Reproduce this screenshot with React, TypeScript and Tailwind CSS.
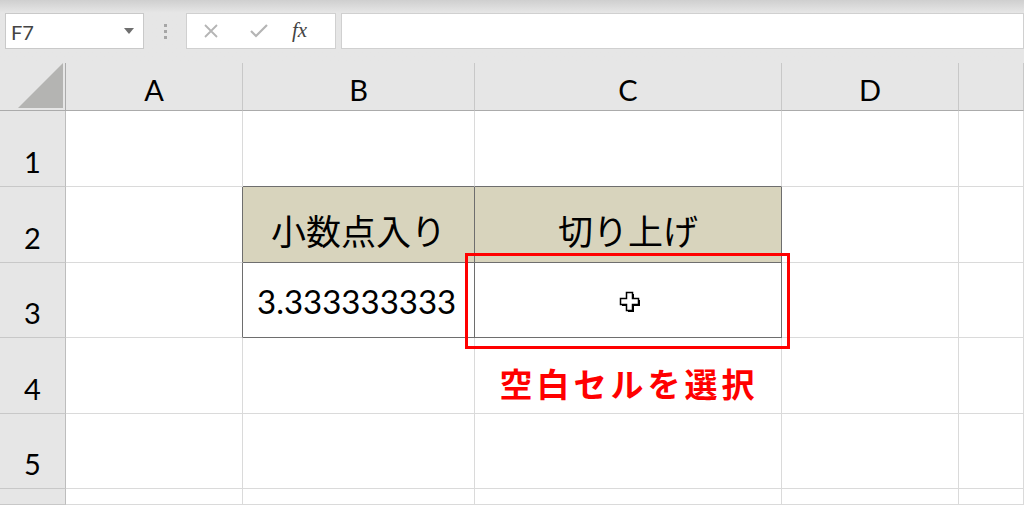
import React from "react";

const cols = ["A", "B", "C", "D", ""];
const rowHeights = [76, 76, 75, 76, 75, 16];
const latin = "font-['Lato','Noto_Sans_CJK_JP',sans-serif]";
const jp = "font-['Noto_Sans_CJK_JP',sans-serif]";

function CursorPlus() {
    return (
        <svg width="22" height="22" viewBox="0 0 22 22">
            <path d="M9 3h6v6h6v6h-6v6H9v-6H3V9h6z" fill="#000" />
            <path d="M7.5 1.5h6v6h6v6h-6v6h-6v-6h-6v-6h6z" fill="#fff" stroke="#000" strokeWidth="1.5" />
        </svg>
    );
}

function Cell({ r, c }: { r: number; c: number }) {
    const inTable = (r === 2 || r === 3) && (c === 1 || c === 2);
    const leftOfTable = (r === 2 || r === 3) && c === 0;
    const aboveTable = r === 1 && (c === 1 || c === 2);
    let cls = "border-r border-b border-[#dadada] bg-white flex items-end justify-center";
    if (inTable) cls = "border-r border-b border-[#6e6e6e] flex items-end justify-center";
    if (leftOfTable) cls = "border-r border-b border-r-[#6e6e6e] border-b-[#dadada] bg-white";
    if (aboveTable) cls = "border-r border-b border-r-[#dadada] border-b-[#6e6e6e] bg-white";
    if (r === 2 && inTable) cls += " bg-[#d8d4bd]";
    else if (inTable) cls += " bg-white";

    let content: React.ReactNode = null;
    if (r === 2 && c === 1) content = <span className={`${jp} text-[35px] leading-none text-black pb-[15px]`}>小数点入り</span>;
    if (r === 2 && c === 2) content = <span className={`${jp} text-[35px] leading-none text-black pb-[15px]`}>切り上げ</span>;
    if (r === 3 && c === 1) content = <span className={`${latin} text-[33px] leading-none text-black pb-[19px] pl-[14px] w-full text-left`}>3.333333333</span>;
    if (r === 3 && c === 2) content = <div className="self-center pt-[4px] pl-[4px]"><CursorPlus /></div>;
    if (r === 4 && c === 2)
        content = (
            <span className={`${jp} text-[33px] font-bold leading-none text-[#ff0000] tracking-[4px] pb-[13px] pl-[2px]`}>
                空白セルを選択
            </span>
        );
    return <div className={cls}>{content}</div>;
}

export default function App() {
    return (
        <div className="w-[1024px] h-[505px] overflow-hidden bg-[#e6e6e6] relative">
            {/* formula bar */}
            <div className="h-[63px] bg-gradient-to-b from-[#cfcfcf] via-[#e6e6e6] via-[20%] to-[#e6e6e6] flex items-start pt-[13px] pl-[5px]">
                <div className="w-[139px] h-[36px] bg-white border border-[#c9c9c9] flex items-center justify-between pl-[5px] pr-[9px]">
                    <span className={`${latin} text-[20px] text-[#444] leading-none pt-[2px]`}>F7</span>
                    <svg width="10" height="6" viewBox="0 0 10 6"><path d="M0 0h10L5 6z" fill="#6f6f6f" /></svg>
                </div>
                <div className="w-[42px] h-[36px] flex flex-col items-center justify-center gap-[3px]">
                    <span className="w-[3px] h-[3px] bg-[#a6a6a6]" />
                    <span className="w-[3px] h-[3px] bg-[#a6a6a6]" />
                    <span className="w-[3px] h-[3px] bg-[#a6a6a6]" />
                </div>
                <div className="w-[150px] h-[36px] bg-white border border-[#d0d0d0] flex items-center pl-[15px] gap-[29px]">
                    <svg width="18" height="18" viewBox="0 0 18 18"><path d="M3 3l12 12M15 3L3 15" stroke="#b5b5b5" strokeWidth="1.8" /></svg>
                    <svg width="20" height="18" viewBox="0 0 20 18"><path d="M2 9l5 5L18 3" stroke="#b5b5b5" strokeWidth="2.2" fill="none" /></svg>
                    <span className="font-['Liberation_Serif',serif] italic text-[21px] text-[#444] -ml-[6px]">fx</span>
                </div>
                <div className="ml-[5px] flex-1 h-[36px] bg-white border border-[#d0d0d0]" />
            </div>

            {/* sheet grid */}
            <div className="grid grid-cols-[66px_177px_232px_307px_177px_65px] grid-rows-[48px_76px_76px_75px_76px_75px_16px]">
                <div className="border-r border-b border-[#ababab] flex items-end justify-end pr-[2px] pb-[2px]">
                    <svg width="45" height="45" viewBox="0 0 45 45"><path d="M45 0v45H0z" fill="#b4b4b2" /></svg>
                </div>
                {cols.map((c, i) => (
                    <div key={i} className="border-b border-b-[#ababab] border-r border-r-[#c8c8c8] flex items-center justify-center pt-[6px]">
                        <span className={`${latin} text-[29px] text-black leading-none`}>{c}</span>
                    </div>
                ))}
                {rowHeights.map((_, ri) => {
                    const r = ri + 1;
                    return (
                        <React.Fragment key={r}>
                            <div className="border-r border-r-[#bdbdbd] border-b border-b-[#c8c8c8] flex items-end justify-center pb-[10px]">
                                <span className={`${latin} text-[29px] text-black leading-none`}>{r <= 5 ? r : ""}</span>
                            </div>
                            {[0, 1, 2, 3, 4].map((c) => (
                                <Cell key={c} r={r} c={c} />
                            ))}
                        </React.Fragment>
                    );
                })}
            </div>

            {/* selection highlight */}
            <div className="absolute left-[465px] top-[253px] w-[325px] h-[96px] border-[3px] border-[#ff0000] pointer-events-none" />
        </div>
    );
}
